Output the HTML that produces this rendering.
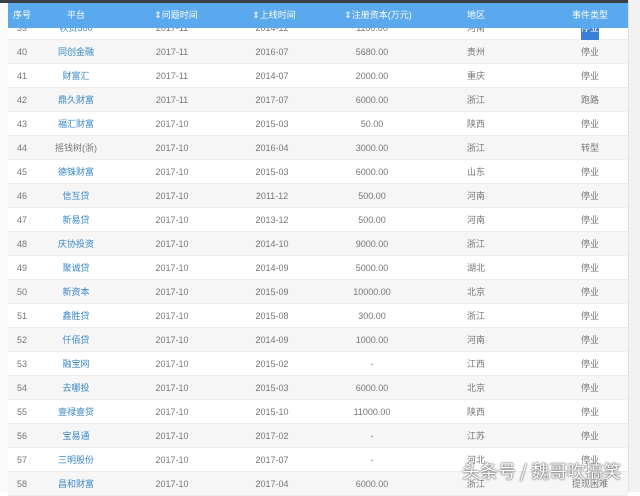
<!DOCTYPE html>
<html><head><meta charset="utf-8"><style>
*{margin:0;padding:0;box-sizing:border-box}
body{width:640px;height:492px;overflow:hidden;background:#fff;font-family:"Liberation Sans","Noto Sans CJK SC",sans-serif;font-size:9px;color:#777;position:relative}
.top{position:absolute;left:0;top:0;width:640px;height:3px;background:#3a3f44}
.sb{position:absolute;left:628px;top:0;width:12px;height:492px;background:#f2f2f2;border-left:1px solid #e2e2e2}
.lm{position:absolute;left:0;top:0;width:8px;height:492px;background:#fafafa}
.hd{position:absolute;left:8px;top:3px;width:620px;height:25px;background:#5aa9ee;color:#fff}
.r{position:absolute;left:8px;width:620px;height:24px;border-bottom:1px solid #eee}
.g{background:#f6f6f6}
.c{position:absolute;top:0;line-height:24px;white-space:nowrap;transform:translateX(-50%)}
.hd .c{line-height:25px}
.l{color:#3a87c8}
.wm{position:absolute;left:462px;top:460px;font-size:18px;color:#fff;text-shadow:0 0 2px #555,0 0 1px #333;white-space:nowrap;font-family:"Noto Sans CJK SC",sans-serif;line-height:22px}
</style></head><body>
<div class="lm"></div>
<div class="r" style="top:16px"><span class="c" style="left:14px">39</span><span class="c l" style="left:68px">秋贷500</span><span class="c" style="left:164px">2017-11</span><span class="c" style="left:264px">2014-12</span><span class="c" style="left:364px">1100.00</span><span class="c" style="left:468px">河南</span><span class="c" style="left:582px;background:#3b7ed8;color:#fff">停业</span></div>
<div id="rows"></div>
<div class="hd"><span class="c" style="left:14px">序号</span><span class="c" style="left:68px">平台</span><span class="c" style="left:168px">⇕问题时间</span><span class="c" style="left:266px">⇕上线时间</span><span class="c" style="left:370px">⇕注册资本(万元)</span><span class="c" style="left:468px">地区</span><span class="c" style="left:582px">事件类型</span></div>
<div class="top"></div>
<div class="sb"></div>
<script>
var d=[["40","同创金融",1,"2017-11","2016-07","5680.00","贵州","停业"],
["41","财富汇",1,"2017-11","2014-07","2000.00","重庆","停业"],
["42","鼎久财富",1,"2017-11","2017-07","6000.00","浙江","跑路"],
["43","福汇财富",1,"2017-10","2015-03","50.00","陕西","停业"],
["44","摇钱树(浙)",0,"2017-10","2016-04","3000.00","浙江","转型"],
["45","德铢财富",1,"2017-10","2015-03","6000.00","山东","停业"],
["46","信互贷",1,"2017-10","2011-12","500.00","河南","停业"],
["47","新易贷",1,"2017-10","2013-12","500.00","河南","停业"],
["48","庆协投资",1,"2017-10","2014-10","9000.00","浙江","停业"],
["49","聚诚贷",1,"2017-10","2014-09","5000.00","湖北","停业"],
["50","新资本",1,"2017-10","2015-09","10000.00","北京","停业"],
["51","鑫胜贷",1,"2017-10","2015-08","300.00","浙江","停业"],
["52","仟佰贷",1,"2017-10","2014-09","1000.00","河南","停业"],
["53","融宝网",1,"2017-10","2015-02","-","江西","停业"],
["54","去哪投",1,"2017-10","2015-03","6000.00","北京","停业"],
["55","壹禄壹贷",1,"2017-10","2015-10","11000.00","陕西","停业"],
["56","宝易通",1,"2017-10","2017-02","-","江苏","停业"],
["57","三明股份",1,"2017-10","2017-07","-","河北","停业"],
["58","昌和财富",1,"2017-10","2017-04","6000.00","浙江","提现困难"]];
var h="";d.forEach(function(r,i){var t=40+i*24;
h+='<div class="r'+(i%2==0?' g':'')+'" style="top:'+t+'px"><span class="c" style="left:14px">'+r[0]+'</span><span class="c'+(r[2]?' l':'')+'" style="left:68px">'+r[1]+'</span><span class="c" style="left:164px">'+r[3]+'</span><span class="c" style="left:264px">'+r[4]+'</span><span class="c" style="left:364px">'+r[5]+'</span><span class="c" style="left:468px">'+r[6]+'</span><span class="c" style="left:582px">'+r[7]+'</span></div>';});
document.getElementById("rows").innerHTML=h;
</script>
<div class="wm">头条号 / 魏哥吹搞笑</div>
</body></html>
